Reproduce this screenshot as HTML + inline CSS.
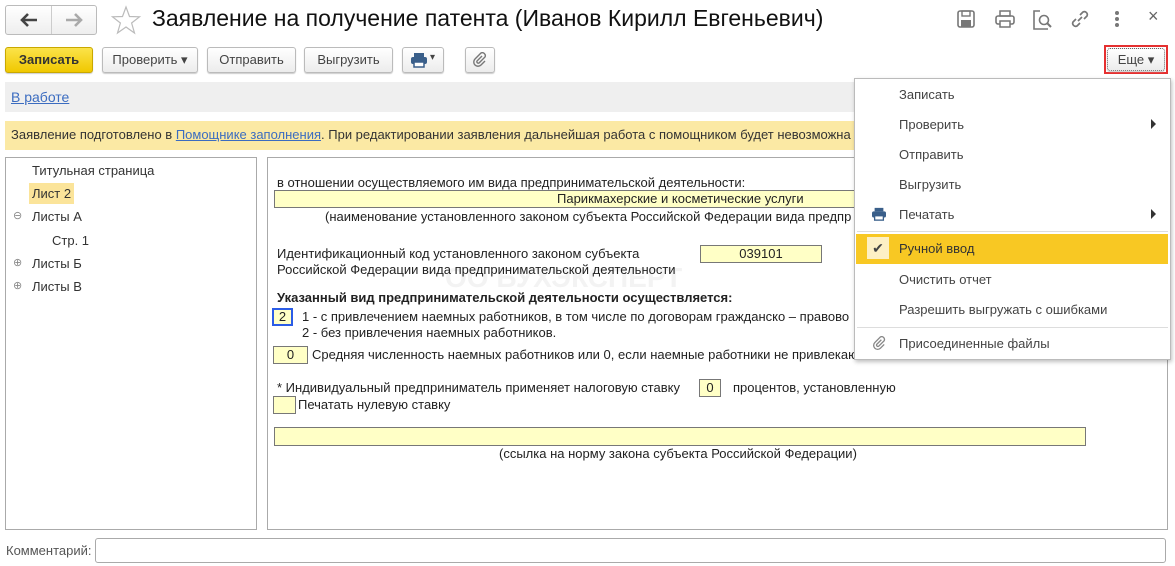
<!DOCTYPE html>
<html><head><meta charset="utf-8"><style>
*{box-sizing:border-box;margin:0;padding:0}
body{width:1175px;height:566px;background:#fff;font-family:"Liberation Sans",sans-serif;font-size:13px;color:#333;position:relative;overflow:hidden}
.a{position:absolute;white-space:nowrap}
.btn{position:absolute;top:47px;height:26px;border:1px solid #bbb;border-radius:3px;background:linear-gradient(#fff,#ececec);box-shadow:0 1px 1px #ccc;font-size:13px;color:#444;text-align:center;line-height:24px}
.f{font-family:"Liberation Sans",sans-serif;font-size:13px;color:#222}
.fld{position:absolute;background:#ffffc6;border:1px solid #777;font-size:13px;text-align:center;line-height:15px;color:#222}
.mi{position:absolute;left:899px;font-size:13px;color:#444}
.tr{position:absolute;border-left:5px solid #333;border-top:5px solid transparent;border-bottom:5px solid transparent;left:1151px}
</style></head><body>
<div class="a" style="left:5px;top:5px;width:92px;height:30px;border:1px solid #bbb;border-radius:3px;background:linear-gradient(#fff,#eee)"></div>
<div class="a" style="left:51px;top:6px;width:1px;height:28px;background:#ccc"></div>
<svg class="a" style="left:19px;top:12px" width="20" height="16" viewBox="0 0 20 16"><path d="M18 8H4M9 2L3 8l6 6" fill="none" stroke="#444" stroke-width="2.6"/></svg>
<svg class="a" style="left:64px;top:12px" width="20" height="16" viewBox="0 0 20 16"><path d="M2 8h14M11 2l6 6-6 6" fill="none" stroke="#aaa" stroke-width="2.6"/></svg>
<svg class="a" style="left:110px;top:5px" width="32" height="30" viewBox="0 0 32 30"><polygon points="16,2 19.5,11.5 29.5,11.8 21.6,18 24.5,28 16,22 7.5,28 10.4,18 2.5,11.8 12.5,11.5" fill="none" stroke="#bbb" stroke-width="1.2"/></svg>
<div class="a" style="left:152px;top:5px;font-size:23px;color:#111">Заявление на получение патента (Иванов Кирилл Евгеньевич)</div>
<svg class="a" style="left:956px;top:9px" width="20" height="20" viewBox="0 0 20 20"><rect x="2" y="2" width="16" height="16" rx="2" fill="none" stroke="#777" stroke-width="1.6"/><rect x="6" y="2" width="8" height="5" fill="none" stroke="#777" stroke-width="1.4"/><rect x="5" y="11" width="10" height="7" fill="#777"/></svg>
<svg class="a" style="left:994px;top:9px" width="22" height="20" viewBox="0 0 22 20"><rect x="6" y="2" width="10" height="5" fill="none" stroke="#777" stroke-width="1.5"/><rect x="2" y="7" width="18" height="8" rx="2" fill="none" stroke="#777" stroke-width="1.6"/><rect x="6" y="12" width="10" height="6" fill="#fff" stroke="#777" stroke-width="1.5"/></svg>
<svg class="a" style="left:1032px;top:9px" width="22" height="22" viewBox="0 0 22 22"><path d="M8 2H2V20H16" fill="none" stroke="#777" stroke-width="1.6"/><circle cx="12" cy="11" r="4.5" fill="none" stroke="#777" stroke-width="1.6"/><path d="M15 14L19 18" stroke="#777" stroke-width="2"/></svg>
<svg class="a" style="left:1069px;top:8px" width="22" height="22" viewBox="0 0 22 22"><path d="M9 13L13 9M7 11L4 14a3 3 0 0 0 4 4l3-3M15 11l3-3a3 3 0 0 0-4-4l-3 3" fill="none" stroke="#777" stroke-width="1.7"/></svg>
<div class="a" style="left:1115px;top:11px;width:4px;height:4px;border-radius:2px;background:#777;box-shadow:0 6px #777,0 12px #777"></div>
<div class="a" style="left:1148px;top:6px;font-size:18px;color:#666">×</div>
<div class="btn" style="left:5px;width:88px;background:linear-gradient(#fbe34a,#f0c800);border-color:#c9a800;color:#333;font-weight:bold">Записать</div>
<div class="btn" style="left:102px;width:96px">Проверить ▾</div>
<div class="btn" style="left:207px;width:89px">Отправить</div>
<div class="btn" style="left:304px;width:89px">Выгрузить</div>
<div class="btn" style="left:402px;width:42px"></div>
<svg class="a" style="left:410px;top:52px" width="18" height="16" viewBox="0 0 18 16"><rect x="4" y="1" width="10" height="4" fill="#3a5f8a"/><rect x="1" y="5" width="16" height="7" rx="2" fill="#3a5f8a"/><rect x="4" y="10" width="10" height="5" fill="#fff" stroke="#3a5f8a" stroke-width="1.5"/></svg>
<div class="a" style="left:430px;top:52px;font-size:10px;color:#444">▾</div>
<div class="btn" style="left:465px;width:30px"></div>
<svg class="a" style="left:472px;top:52px" width="16" height="16" viewBox="0 0 16 16"><path d="M10 4L5 9a1.5 1.5 0 0 0 2 2l6-6a3 3 0 0 0-4-4L3 7a4.2 4.2 0 0 0 6 6l4-4" fill="none" stroke="#777" stroke-width="1.4"/></svg>
<div class="a" style="left:1104px;top:45px;width:64px;height:29px;border:2px solid #e53030"></div>
<div class="btn" style="left:1107px;top:48px;width:58px;height:23px;line-height:21px;border:1px dotted #666">Еще ▾</div>
<div class="a" style="left:5px;top:82px;width:1163px;height:30px;background:#efefef"></div>
<div class="a" style="left:11px;top:89px;color:#3b6cc0;text-decoration:underline;font-size:14px">В работе</div>
<div class="a" style="left:5px;top:121px;width:1163px;height:29px;background:#fbe9a4"></div>
<div class="a" style="left:11px;top:127px;font-size:13px;color:#333">Заявление подготовлено в <span style="color:#3b6cc0;text-decoration:underline">Помощнике заполнения</span>. При редактировании заявления дальнейшая работа с помощником будет невозможна</div>
<div class="a" style="left:5px;top:157px;width:252px;height:373px;border:1px solid #aaa"></div>
<div class="a" style="left:32px;top:163px">Титульная страница</div>
<div class="a" style="left:29px;top:183px;width:45px;height:21px;background:#fbe49a"></div>
<div class="a" style="left:32px;top:186px">Лист 2</div>
<div class="a" style="left:13px;top:209px;font-size:11px;color:#888">⊖</div><div class="a" style="left:32px;top:209px">Листы А</div>
<div class="a" style="left:52px;top:233px">Стр. 1</div>
<div class="a" style="left:13px;top:256px;font-size:11px;color:#888">⊕</div><div class="a" style="left:32px;top:256px">Листы Б</div>
<div class="a" style="left:13px;top:279px;font-size:11px;color:#888">⊕</div><div class="a" style="left:32px;top:279px">Листы В</div>
<div class="a" style="left:267px;top:157px;width:901px;height:373px;border:1px solid #aaa"></div>
<div class="a" style="left:445px;top:262px;font-size:28px;font-weight:bold;color:#f3f3f3">ОО БУХЭКСПЕРТ</div>
<div class="a f" style="left:277px;top:175px">в отношении осуществляемого им вида предпринимательской деятельности:</div>
<div class="fld" style="left:274px;top:190px;width:600px;height:18px;text-align:left;padding-left:282px">Парикмахерские и косметические услуги</div>
<div class="a f" style="left:325px;top:209px">(наименование установленного законом субъекта Российской Федерации вида предпр</div>
<div class="a f" style="left:277px;top:246px">Идентификационный код установленного законом субъекта</div>
<div class="a f" style="left:277px;top:262px">Российской Федерации вида предпринимательской деятельности</div>
<div class="fld" style="left:700px;top:245px;width:122px;height:18px">039101</div>
<div class="a f" style="left:277px;top:290px;font-weight:bold">Указанный вид предпринимательской деятельности осуществляется:</div>
<div class="fld" style="left:272px;top:308px;width:21px;height:18px;border:2px solid #2b5ce6;line-height:14px">2</div>
<div class="a f" style="left:302px;top:309px">1 - с привлечением наемных работников, в том числе по договорам гражданско – правово</div>
<div class="a f" style="left:302px;top:325px">2 - без привлечения наемных работников.</div>
<div class="fld" style="left:273px;top:346px;width:35px;height:18px">0</div>
<div class="a f" style="left:312px;top:347px">Средняя численность наемных работников или 0, если наемные работники не привлекаю</div>
<div class="a f" style="left:277px;top:380px">* Индивидуальный предприниматель применяет налоговую ставку</div>
<div class="fld" style="left:699px;top:379px;width:22px;height:18px">0</div>
<div class="a f" style="left:733px;top:380px">процентов, установленную</div>
<div class="fld" style="left:273px;top:396px;width:23px;height:18px"></div>
<div class="a f" style="left:298px;top:397px">Печатать нулевую ставку</div>
<div class="fld" style="left:274px;top:427px;width:812px;height:19px"></div>
<div class="a f" style="left:499px;top:446px">(ссылка на норму закона субъекта Российской Федерации)</div>
<div class="a" style="left:6px;top:543px;font-size:13px;color:#555">Комментарий:</div>
<div class="a" style="left:95px;top:538px;width:1071px;height:25px;border:1px solid #aaa;border-radius:3px"></div>
<div class="a" style="left:854px;top:78px;width:317px;height:282px;background:#fff;border:1px solid #bbb;box-shadow:1px 2px 4px rgba(0,0,0,.25)"></div>
<div class="mi" style="top:87px">Записать</div>
<div class="mi" style="top:117px">Проверить</div><div class="tr" style="top:119px"></div>
<div class="mi" style="top:147px">Отправить</div>
<div class="mi" style="top:177px">Выгрузить</div>
<svg class="a" style="left:871px;top:207px" width="16" height="14" viewBox="0 0 18 16"><rect x="4" y="1" width="10" height="4" fill="#3a5f8a"/><rect x="1" y="5" width="16" height="7" rx="2" fill="#3a5f8a"/><rect x="4" y="10" width="10" height="5" fill="#fff" stroke="#3a5f8a" stroke-width="1.5"/></svg>
<div class="mi" style="top:207px">Печатать</div><div class="tr" style="top:209px"></div>
<div class="a" style="left:857px;top:231px;width:311px;height:1px;background:#ddd"></div>
<div class="a" style="left:856px;top:234px;width:312px;height:30px;background:#f8c823"></div>
<div class="a" style="left:867px;top:237px;width:22px;height:22px;background:#fdf0c4;text-align:center;font-size:14px;line-height:22px;color:#444">✔</div>
<div class="mi" style="top:241px;color:#333">Ручной ввод</div>
<div class="mi" style="top:272px">Очистить отчет</div>
<div class="mi" style="top:302px">Разрешить выгружать с ошибками</div>
<div class="a" style="left:857px;top:327px;width:311px;height:1px;background:#ddd"></div>
<svg class="a" style="left:872px;top:336px" width="15" height="15" viewBox="0 0 16 16"><path d="M10 4L5 9a1.5 1.5 0 0 0 2 2l6-6a3 3 0 0 0-4-4L3 7a4.2 4.2 0 0 0 6 6l4-4" fill="none" stroke="#888" stroke-width="1.4"/></svg>
<div class="mi" style="top:336px">Присоединенные файлы</div>
</body></html>
